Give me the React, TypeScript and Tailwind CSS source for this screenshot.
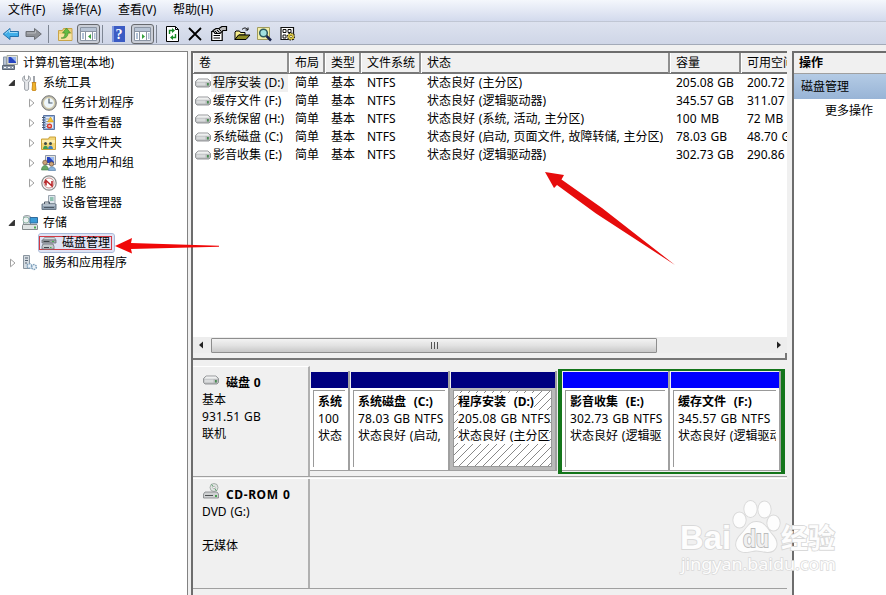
import React from 'react'
import clsx from 'clsx'

interface TreeItem {
  name: string
  icon: string
  depth: number
  state?: 'open' | 'closed'
  selected?: boolean
}

interface Partition {
  name: string
  size: string
  status: string
  width: string
  logical?: boolean
  selected?: boolean
}

const menus = ['文件(F)', '操作(A)', '查看(V)', '帮助(H)']

const treeItems: TreeItem[] = [
  { name: '计算机管理(本地)', icon: 'computer', depth: 0 },
  { name: '系统工具', icon: 'tools', depth: 1, state: 'open' },
  { name: '任务计划程序', icon: 'clock', depth: 2, state: 'closed' },
  { name: '事件查看器', icon: 'event', depth: 2, state: 'closed' },
  { name: '共享文件夹', icon: 'share', depth: 2, state: 'closed' },
  { name: '本地用户和组', icon: 'users', depth: 2, state: 'closed' },
  { name: '性能', icon: 'perf', depth: 2, state: 'closed' },
  { name: '设备管理器', icon: 'device', depth: 2 },
  { name: '存储', icon: 'storage', depth: 1, state: 'open' },
  { name: '磁盘管理', icon: 'diskmgmt', depth: 2, selected: true },
  { name: '服务和应用程序', icon: 'services', depth: 1, state: 'closed' },
]

const columns = ['卷', '布局', '类型', '文件系统', '状态', '容量', '可用空间']

const volumes = [
  ['程序安装 (D:)', '简单', '基本', 'NTFS', '状态良好 (主分区)', '205.08 GB', '200.72'],
  ['缓存文件 (F:)', '简单', '基本', 'NTFS', '状态良好 (逻辑驱动器)', '345.57 GB', '311.07'],
  ['系统保留 (H:)', '简单', '基本', 'NTFS', '状态良好 (系统, 活动, 主分区)', '100 MB', '72 MB'],
  ['系统磁盘 (C:)', '简单', '基本', 'NTFS', '状态良好 (启动, 页面文件, 故障转储, 主分区)', '78.03 GB', '48.70 G'],
  ['影音收集 (E:)', '简单', '基本', 'NTFS', '状态良好 (逻辑驱动器)', '302.73 GB', '290.86'],
]

const primary: Partition[] = [
  { name: '系统', size: '100', status: '状态', width: 'w-10' },
  { name: '系统磁盘  (C:)', size: '78.03 GB NTFS', status: '状态良好 (启动,', width: 'w-[100px]' },
  { name: '程序安装  (D:)', size: '205.08 GB NTFS', status: '状态良好 (主分区', width: 'w-[107px]', selected: true },
]

const logical: Partition[] = [
  { name: '影音收集  (E:)', size: '302.73 GB NTFS', status: '状态良好 (逻辑驱', width: 'w-[108px]', logical: true },
  { name: '缓存文件  (F:)', size: '345.57 GB NTFS', status: '状态良好 (逻辑驱动', width: 'w-[111px]', logical: true },
]

const gridCols = 'grid grid-cols-[96px_36px_36px_60px_249px_71px_80px]'

function Icon({ name }: { name: string }) {
  return (
    <svg width="16" height="16" viewBox="0 0 16 16" className="shrink-0">
      {name === 'computer' && (
        <>
          <path d="M1.500 2h3v8h-3z" fill="#b9c4d4" stroke="#8a97aa" />
          <path d="M5 .5h10.500v9H5z" fill="#e4e4dc" stroke="#a3a89f" />
          <path d="M6.500 2h7.500v6H6.500z" fill="#2644c0" />
          <path d="M9 2h5v5z" fill="#9bb9f0" />
          <path d="M.5 10.500h12v4H.5z" fill="#8c98a8" stroke="#5c6674" />
          <path d="M2 12.500h2m2 0h2m2 0h1" stroke="#fff" />
        </>
      )}
      {name === 'tools' && (
        <>
          <path d="M2.500.8v3.400l2 1.200 2-1.200V.8c1.300.8 2 2 2 3.400 0 1.300-.8 2.300-1.900 2.800v7.200c0 1.600-4 1.600-4 0V7C1.300 6.500.6 5.500.6 4.200.6 2.800 1.300 1.500 2.500.8z" fill="#e5e7ea" stroke="#858b92" strokeWidth=".8" />
          <path d="M12 1v7" stroke="#8a8f96" strokeWidth="1.600" />
          <path d="M10 7.500h4l-.6 1.500.6 6c-.5 1-3.500 1-4 0l.6-6z" fill="#f0b429" stroke="#c07b0c" strokeWidth=".8" />
        </>
      )}
      {name === 'clock' && (
        <>
          <circle cx="8" cy="8" r="7.300" fill="#b3b3ae" stroke="#7d7d78" />
          <circle cx="8" cy="8" r="5.500" fill="#eef6fc" stroke="#d8cfa6" />
          <path d="M8 3.500V8h3.500" fill="none" stroke="#4b5c6c" strokeWidth="1.200" />
        </>
      )}
      {name === 'event' && (
        <>
          <path d="M2.500.5h11v14h-11z" fill="#98b4db" stroke="#5b75a4" />
          <path d="M5 2h7v11H5z" fill="#e9eef6" />
          <path d="M5 4h3M5 6.500h2M5 9h2M5 11.500h2" stroke="#8a9cba" />
          <path d="M1 2.500h3M1 5h3M1 7.500h3M1 10h3M1 12.500h3" stroke="#4c5a70" />
          <path d="M9.500 2l3 5H6.500z" fill="#f5c52c" stroke="#c58a0b" strokeWidth=".5" />
          <circle cx="8.500" cy="11" r="2.600" fill="#da3a2c" />
          <path d="M7.500 10l2 2m0-2l-2 2" stroke="#fff" strokeWidth=".8" />
        </>
      )}
      {name === 'share' && (
        <>
          <path d="M.5 4h7l1-2h6v12.500H.5z" fill="#f4d676" stroke="#c9a13b" />
          <path d="M1 5h13v3H1z" fill="#fbecae" />
          <circle cx="4.500" cy="8.500" r="1.500" fill="#3c4a47" />
          <circle cx="9.500" cy="8.500" r="1.500" fill="#3c4a47" />
          <path d="M2 14c0-4.500 5-4.500 5 0z" fill="#3e9b53" />
          <path d="M7 14c0-4.500 5-4.500 5 0z" fill="#3c7fc2" />
        </>
      )}
      {name === 'users' && (
        <>
          <path d="M4.500.5h10v9h-10z" fill="#e4e4dc" stroke="#8d97a7" />
          <path d="M6 2h7v6H6z" fill="#2644c0" />
          <path d="M8.500 2H13v5z" fill="#9bb9f0" />
          <circle cx="4" cy="7.500" r="2.300" fill="#caa277" stroke="#5d4630" strokeWidth=".6" />
          <path d="M.5 15c0-6 7-6 7 0z" fill="#68a868" stroke="#3d7a45" strokeWidth=".6" />
          <circle cx="10.500" cy="9" r="2.200" fill="#caa277" stroke="#5d4630" strokeWidth=".6" />
          <path d="M7.500 15.500c0-5 7-5 7 0z" fill="#8bb5dc" stroke="#46729e" strokeWidth=".6" />
        </>
      )}
      {name === 'perf' && (
        <>
          <circle cx="8" cy="8" r="7.200" fill="#f5f5f5" stroke="#8b8b8b" strokeWidth="1.200" />
          <circle cx="8" cy="8" r="5" fill="#fff" stroke="#c98f8e" strokeWidth="1" />
          <path d="M5 10.500V5.500l6 5.500V6M5 5.500L3.500 8" fill="none" stroke="#b9292b" strokeWidth="1.600" />
        </>
      )}
      {name === 'device' && (
        <>
          <path d="M7.500.5h6.500v8H7.500z" fill="#dfe6ec" stroke="#9aa5af" />
          <path d="M9 2h3.500v4H9z" fill="#8fc2b1" />
          <path d="M1 9h14v5.500H1z" fill="#8e9eae" stroke="#6a7886" />
          <path d="M2 10h12" stroke="#dfe7ef" />
          <path d="M3.500 9V7h5v2M3 12.500h10" fill="none" stroke="#4d5966" />
        </>
      )}
      {name === 'storage' && (
        <>
          <path d="M1.500 2c0-2 7-2 7 0v8h-7z" fill="#d0d6db" stroke="#858d94" strokeWidth=".8" />
          <circle cx="4" cy="5" r="3" fill="#eef1f3" stroke="#83b098" strokeWidth=".8" />
          <path d="M8 2.500h7.500v5.500H8z" fill="#3a9bd8" stroke="#316b9b" />
          <path d="M1 9.500h14l.5 1v4H.5v-4z" fill="#dfe3e3" stroke="#858b8c" />
          <path d="M12 11.500h2v2h-2z" fill="#4aac50" />
        </>
      )}
      {name === 'diskmgmt' && (
        <>
          <path d="M3.500 2.500h10l1.500 2.500H2z" fill="#d7dadd" stroke="#8b9197" strokeWidth=".8" />
          <path d="M1 5h14v3H1z" fill="#a1a7ac" stroke="#6a7076" strokeWidth=".8" />
          <path d="M2 9h10l1 2.500V14H1v-2.500z" fill="#c4c9cd" stroke="#6a7076" strokeWidth=".8" />
          <path d="M2.500 6.500h6M3 12.500h5" stroke="#3f4449" />
          <path d="M11 6.500h2m-4 6h1.500" stroke="#49b14f" />
        </>
      )}
      {name === 'services' && (
        <>
          <path d="M1.500.5h6v13h-6z" fill="#d3dae0" stroke="#8a959f" />
          <path d="M3 3h3M3 5.500h3M3 8h2" stroke="#546373" />
          <circle cx="7.500" cy="11" r="2.300" fill="#eaf2f9" stroke="#7fa0bb" strokeWidth="1.500" strokeDasharray="1.500 .8" />
          <circle cx="12" cy="12" r="2.400" fill="#eaf2f9" stroke="#7fa0bb" strokeWidth="1.500" strokeDasharray="1.500 .8" />
        </>
      )}
      {name === 'drive' && (
        <>
          <path d="M3 4h10l2.500 2.500v4L14 12H2L.5 10.500v-4z" fill="#b8babc" stroke="#8a8d90" strokeWidth=".9" />
          <path d="M3 4.500h10l1.800 2.200H1.200z" fill="#eff0f0" />
          <path d="M1.500 7.500h9v3h-9z" fill="#d9dbdc" />
          <path d="M12 8h1.800v2.500H12z" fill="#478b50" />
        </>
      )}
      {name === 'cdrom' && (
        <>
          <circle cx="11" cy="4.500" r="4" fill="#e0e5e2" stroke="#969e9a" strokeWidth=".8" />
          <path d="M11 4.500L8.500 1.500M11 4.500L13.500 8" stroke="#5aa36c" />
          <circle cx="11" cy="4.500" r="1.200" fill="#fff" stroke="#888" strokeWidth=".5" />
          <path d="M2 9h12l1.500 2v4H.5v-4z" fill="#cfd1d2" stroke="#7e8183" strokeWidth=".8" />
          <path d="M2 12.500h8" stroke="#4d5052" />
          <path d="M12 12h2v2h-2z" fill="#47a04f" />
        </>
      )}
    </svg>
  )
}

function Toolbar() {
  return (
    <div className="flex h-[23px] items-center border-b border-[#a3aab8] bg-linear-to-b from-[#dde2ef] to-[#cfd6e7] pt-[2px] pl-[2px]">
      <svg width="17" height="16" viewBox="0 0 17 16">
        <path d="M1.200 8L8 2.500v3h8.500v5H8v3z" fill="#41aee8" stroke="#2372ad" />
        <path d="M3.500 7.500L7.500 4v2.500h8" fill="none" stroke="#a5ddf8" />
      </svg>
      <svg width="17" height="16" viewBox="0 0 17 16" className="ml-[6px]">
        <path d="M16.300 8L9.500 2.500v3H1v5h8.500v3z" fill="#8e9196" stroke="#6d7076" />
        <path d="M2 7h8.500V4.500" fill="none" stroke="#b9bbbf" />
      </svg>
      <div className="ml-[6px] h-[18px] w-px bg-[#7e8694]" />
      <svg width="16" height="16" viewBox="0 0 16 16" className="ml-[9px]">
        <path d="M.5 4.500h4l1-2h8.500v12H.5z" fill="#eed17d" stroke="#c9a448" />
        <path d="M1 8h12.500v6H1z" fill="#f7e3a2" />
        <path d="M3 12c3 0 4-2 4-5H4.500L8.500 2l4 5H10c0 4-3 6-7 5z" fill="#63bb43" stroke="#3c8726" strokeWidth=".6" />
      </svg>
      <div className="w-[3px]" />
      <ToolToggle points="M11 7v5l-3-2.500z" />
      <div className="ml-[2px] h-[18px] w-px bg-[#7e8694]" />
      <svg width="13" height="16" viewBox="0 0 13 16" className="ml-[9px]">
        <rect width="13" height="16" fill="#3b5bc4" />
        <path d="M0 0h2v16H0z" fill="#7d96dd" />
        <text x="7" y="13" fontSize="14" fontWeight="bold" textAnchor="middle" fill="#fff" className="font-['Liberation_Serif',serif]">?</text>
      </svg>
      <div className="w-[6px]" />
      <ToolToggle points="M8 7v5l3-2.500z" />
      <div className="ml-[2px] h-[18px] w-px bg-[#7e8694]" />
      <svg width="13" height="16" viewBox="0 0 13 16" className="ml-[9px]">
        <path d="M.5.500h9l3 3v12H.5z" fill="#fff" stroke="#000" />
        <path d="M9.500.500v3h3" fill="none" stroke="#000" />
        <path d="M3.500 8V4.500H7M9.500 8v3.500H6" fill="none" stroke="#168b26" strokeWidth="1.400" />
        <path d="M6 2l3 2.500L6 7zM7 9l-3 2.500L7 14z" fill="#168b26" />
      </svg>
      <svg width="14" height="16" viewBox="0 0 14 16" className="ml-[9px]">
        <path d="M1 2l12 12M13 2L1 14" stroke="#000" strokeWidth="1.800" />
      </svg>
      <svg width="17" height="16" viewBox="0 0 17 16" className="ml-[9px]">
        <path d="M.7 5.500h10.500v9H.7z" fill="#fff" stroke="#000" strokeWidth="1.200" />
        <path d="M2.500 9.500h6.500M2.500 12h6.500" stroke="#000" />
        <path d="M2 4.500L5 2.500h3l3-2h4.500v4H12l-3 3H4z" fill="#bbb" stroke="#000" strokeWidth="1.200" />
        <path d="M4 5l2 2M6 4l2.500 2.500M8 3l2 2" stroke="#000" />
      </svg>
      <svg width="17" height="16" viewBox="0 0 17 16" className="ml-[6px]">
        <path d="M1 13.500V6l1-1h3.500l1 1.500H11V9H5z" fill="#f7ee8f" stroke="#000" />
        <path d="M1 13.500L4.500 9H16l-4 4.500z" fill="#8d8b25" stroke="#000" />
        <path d="M8 3.500c2-2 4-2 5.500 0m.5-2v2.500h-2.500" fill="none" stroke="#000" />
      </svg>
      <svg width="17" height="16" viewBox="0 0 17 16" className="ml-[6px]">
        <path d="M.5 1.500h12v12H.5z" fill="#f3efaa" stroke="#a19c5c" />
        <circle cx="6.500" cy="7" r="3.800" fill="#a2e2df" stroke="#2d5b60" strokeWidth="1.500" />
        <path d="M9.500 10l4.500 4.500" stroke="#1b244a" strokeWidth="2.500" />
      </svg>
      <svg width="17" height="16" viewBox="0 0 17 16" className="ml-[6px]">
        <path d="M1 1.500h12.500v12H1z" fill="#fff" stroke="#111" strokeWidth="1.200" />
        <path d="M3 3.500h3v3H3zM3 9h3v3H3zM8 3.500h3v3H8z" fill="none" stroke="#111" />
        <circle cx="11" cy="10.500" r="3.500" fill="#e6d24a" stroke="#222" strokeWidth="1.200" strokeDasharray="1.500 1.200" />
        <circle cx="11" cy="10.500" r="1.300" fill="#fff" stroke="#7b6d17" />
      </svg>
    </div>
  )
}

// 按下状态的工具按钮
function ToolToggle({ points }: { points: string }) {
  return (
    <div className="flex h-[20px] w-[23px] items-center justify-center rounded-[3px] border-[1.5px] border-[#67696e] bg-[#c9cdd6]">
      <svg width="17" height="14" viewBox="0 0 17 14">
        <path d="M.5.500h16v13H.5z" fill="#fff" stroke="#8b95a4" />
        <path d="M1 1h15v3H1z" fill="#b8c4d5" />
        <path d="M1 4.500h15M5.500 5v8M12.500 5v8" stroke="#8b95a4" />
        <path d="M2 7h2M2 9h2M2 11h2M14 7h1.500M14 9h1.500M14 11h1.500" stroke="#6584af" />
        <path d={points} fill="#35a23a" />
      </svg>
    </div>
  )
}

function Arrow({ state }: { state?: 'open' | 'closed' }) {
  return (
    <svg width="10" height="10" viewBox="0 0 10 10" className="shrink-0">
      {state === 'open' && <path d="M7.500 2v5.500H2z" fill="#333" stroke="#222" strokeWidth=".8" />}
      {state === 'closed' && <path d="M3.500 1.200v7.600L8 5z" fill="#fff" stroke="#a0a0a0" />}
    </svg>
  )
}

function TreeRow({ item }: { item: TreeItem }) {
  return (
    <div
      className={clsx('flex h-5 items-center', {
        'pl-[2px]': item.depth === 0,
        'pl-[7px]': item.depth === 1,
        'pl-[26px]': item.depth === 2,
      })}
    >
      {item.depth > 0 && <Arrow state={item.state} />}
      <div
        className={clsx(
          'flex h-[18px] items-center',
          item.depth === 1 && 'ml-[5px]',
          item.depth === 2 && 'ml-[3px] pl-[2px]',
          item.selected && 'w-[75px] rounded-[2px] bg-[#dfe3f4] outline outline-[#a9b9d8]',
        )}
      >
        {item.selected ? (
          <div className="-ml-[2px] flex h-[14px] w-[73px] items-center border border-[#d33a45] pl-px">
            <Icon name={item.icon} />
            <span className="ml-[5px]">{item.name}</span>
          </div>
        ) : (
          <>
            <Icon name={item.icon} />
            <span className="ml-[5px]">{item.name}</span>
          </>
        )}
      </div>
    </div>
  )
}

function VolumeList() {
  return (
    <div className="flex h-[307px] flex-col overflow-hidden border-t-2 border-[#6d6d6d] bg-white">
      <div className={clsx(gridCols, 'h-[21px] shrink-0 border-b-2 border-[#777] bg-[#f0f0f0]')}>
        {columns.map((c) => (
          <div key={c} className="border-r-2 border-[#8f8f8f] border-l border-l-white pl-[5px] leading-[20px]">
            {c}
          </div>
        ))}
      </div>
      <div className="flex-1">
        {volumes.map((row, i) => (
          <div key={row[0]} className={clsx(gridCols, 'h-[18px] leading-[18px]')}>
            {row.map((cell, j) =>
              j === 0 ? (
                <div key={j} className="flex items-center pl-[2px]">
                  <Icon name="drive" />
                  <span className={clsx('w-[77px] pl-[2px]', i === 0 && 'bg-[#f0f0f0]')}>{cell}</span>
                </div>
              ) : (
                <div key={j} className="pl-[6px]">{cell}</div>
              ),
            )}
          </div>
        ))}
      </div>
      <div className="flex h-4 shrink-0 items-center bg-[#ededed]">
        <svg width="18" height="16" viewBox="0 0 18 16">
          <path d="M10 4.500v7L6 8z" fill="#222" />
        </svg>
        <div className="flex h-[15px] w-[446px] items-center justify-center gap-[2px] rounded-[1px] border border-[#8e8e8e] bg-linear-to-b from-[#f3f3f3] via-[#e2e2e2] to-[#c8c8c8]">
          <i className="h-[7px] w-px bg-[#555]" />
          <i className="h-[7px] w-px bg-[#555]" />
          <i className="h-[7px] w-px bg-[#555]" />
        </div>
        <div className="flex-1" />
        <svg width="16" height="16" viewBox="0 0 16 16">
          <path d="M6 4.500v7L10 8z" fill="#222" />
        </svg>
      </div>
      <div className="h-[5px] shrink-0 border-r-2 border-[#777] bg-[#f0f0f0]" />
    </div>
  )
}

function PartitionBox({ part }: { part: Partition }) {
  const mask = part.selected && 'bg-white'
  return (
    <div className={clsx('flex h-[100px] shrink-0 flex-col border-r-2 border-b border-[#a0a0a0] pt-px', part.width)}>
      <div className={clsx('h-[16px] shrink-0 border-l border-[#f0f0f0]', part.logical ? 'bg-[#0000ff]' : 'bg-[#000080]')} />
      <div className={clsx('flex min-h-0 flex-1 p-[3px] pt-[2px]', part.selected ? 'bg-[#b9b9b9]' : 'bg-white')}>
        <div
          className={clsx(
            'w-full overflow-hidden border-t border-l border-[#999] pt-[2px] pl-[4px] leading-[17px] whitespace-pre',
            part.selected
              ? 'border-r border-b bg-[repeating-linear-gradient(135deg,#fff_0_5px,#888_5px_5.7px)]'
              : 'bg-white',
          )}
        >
          <div className="font-bold"><span className={clsx(mask)}>{part.name}</span></div>
          <div className="tracking-[0.15px]"><span className={clsx(mask)}>{part.size}</span></div>
          <div><span className={clsx(mask)}>{part.status}</span></div>
        </div>
      </div>
    </div>
  )
}

function DiskMap() {
  return (
    <div className="flex flex-1 flex-col overflow-hidden bg-[#f0f0f0] pt-[6px]">
      <div className="flex h-[111px] shrink-0 border-b border-[#a0a0a0]">
        <div className="w-[117px] shrink-0 border-t border-r-2 border-t-white border-r-[#b0b0b0] pt-[7px] pl-[9px] leading-[17px]">
          <div className="flex h-[17px] items-start">
            <div className="ml-px -mt-[2px]"><Icon name="drive" /></div>
            <b className="ml-[7px]">磁盘 0</b>
          </div>
          <div>基本</div>
          <div className="tracking-[0.1px]">931.51 GB</div>
          <div>联机</div>
        </div>
        <div className="flex pt-[5px]">
          {primary.map((p) => <PartitionBox key={p.name} part={p} />)}
        </div>
        <div className="ml-px mt-[3px] flex h-[105px] border-t-2 border-r-4 border-b-2 border-l-4 border-[#14751b]">
          {logical.map((p) => <PartitionBox key={p.name} part={p} />)}
        </div>
      </div>
      <div className="mt-px flex h-[111px] shrink-0 border-t border-b border-t-white border-b-[#a0a0a0]">
        <div className="w-[117px] shrink-0 border-r-2 border-[#b0b0b0] pt-[7px] pl-[9px] leading-[17px]">
          <div className="flex h-[17px] items-start">
            <div className="ml-px -mt-[3px]"><Icon name="cdrom" /></div>
            <b className="ml-[7px] tracking-[0.6px]">CD-ROM 0</b>
          </div>
          <div>DVD (G:)</div>
          <div className="mt-[17px]">无媒体</div>
        </div>
      </div>
    </div>
  )
}

function Watermark() {
  return (
    <svg width="170" height="90" viewBox="0 0 170 90" className="absolute top-[495px] left-[672px]">
      <g fill="#fdfdfd" stroke="#d9d9d9" strokeWidth="1.800" paintOrder="stroke" className="font-['Liberation_Sans','Noto_Sans_CJK_SC',sans-serif]">
        <text x="8" y="54" fontSize="34" fontWeight="bold" textLength="51" lengthAdjust="spacingAndGlyphs">Bai</text>
        <ellipse cx="67.500" cy="25" rx="6.200" ry="7.500" />
        <ellipse cx="78.500" cy="14" rx="6.200" ry="8" />
        <ellipse cx="92.500" cy="14.500" rx="6.200" ry="8" />
        <ellipse cx="101.500" cy="28" rx="6.200" ry="7.500" />
        <path d="M84.500 27c8 0 10 6 15 12 9 9 5 18-4 18-5 0-7-1.500-11-1.500S78.500 57 73.500 57c-10 0-13-9-4-18 6-6 7-12 15-12z" />
        <text x="71" y="52" fontSize="23" fontWeight="bold" fill="#f0f0f0" stroke="#bcbcbc" textLength="26" lengthAdjust="spacingAndGlyphs">du</text>
        <text x="109" y="53" fontSize="27" fontWeight="bold" textLength="54">经验</text>
        <text x="9" y="75" fontSize="17" strokeWidth="1.400" textLength="155" lengthAdjust="spacingAndGlyphs" className="font-['Noto_Sans',sans-serif]">jingyan.baidu.com</text>
      </g>
    </svg>
  )
}

export default function App() {
  return (
    <div className="relative flex h-[595px] w-[886px] flex-col overflow-hidden bg-[#f0f0f0] font-['Noto_Sans','Noto_Sans_CJK_SC',sans-serif] text-[12px] whitespace-nowrap text-black [word-spacing:0.7px]">
      <div className="flex h-[22px] gap-[16.8px] border-b border-[#c0c6d4] bg-linear-to-b from-[#f4f7fc] to-[#d3daed] pl-2 leading-[20px]">
        {menus.map((m) => <span key={m}>{m}</span>)}
      </div>
      <Toolbar />
      <div className="flex min-h-0 flex-1 pt-[6px]">
        <div className="w-[188px] shrink-0 border-t border-r border-[#828282] bg-white pt-px">
          {treeItems.map((item) => <TreeRow key={item.name} item={item} />)}
        </div>
        <div className="ml-[3px] flex w-[596px] shrink-0 flex-col border-l-2 border-[#6d6d6d]">
          <VolumeList />
          <div className="h-[2px] shrink-0 bg-[#777]" />
          <DiskMap />
        </div>
        <div className="ml-[5px] flex-1 border-t-2 border-l-2 border-[#6d6d6d] bg-white">
          <div className="h-[21px] border-b border-[#a0a0a0] bg-[#f0f0f0] pl-[5px] leading-[20px] font-bold">操作</div>
          <div className="h-[25px] bg-linear-to-b from-[#b4cbe5] to-[#98b4d6] pl-[7px] leading-[26px]">磁盘管理</div>
          <div className="pl-[31px] leading-[24px]">更多操作</div>
        </div>
      </div>
      <svg width="886" height="300" viewBox="0 0 886 300" className="pointer-events-none absolute top-0 left-0">
        <path d="M115 246l17-8-1 5 88 2.800v1l-88 2.200 1 4.600z" fill="#f00808" />
        <path d="M545 172l19 3-2.500 4.500L602 208l73 57-79-51.500L557 185l-3 3z" fill="#e60c0c" />
      </svg>
      <Watermark />
    </div>
  )
}
